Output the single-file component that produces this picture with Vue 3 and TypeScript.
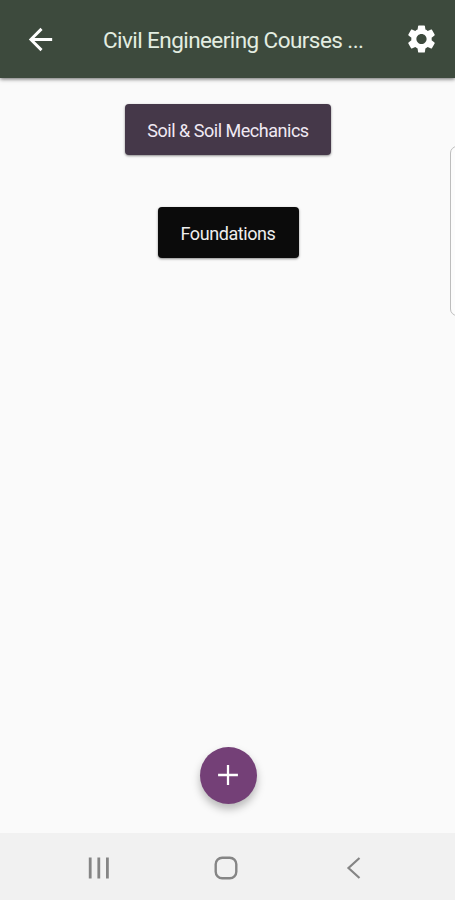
<script setup lang="ts">
interface Topic {
  label: string
  kind: string
}

const topics: Topic[] = [
  { label: 'Soil & Soil Mechanics', kind: 'soil' },
  { label: 'Foundations', kind: 'foundations' },
]
</script>

<template>
  <div class="screen">
    <header class="bar">
      <button class="icon-button" aria-label="Back">
        <svg width="35" height="35" viewBox="0 0 24 24" fill="currentColor">
          <path d="M20 11H7.83l5.59-5.59L12 4l-8 8 8 8 1.41-1.41L7.83 13H20v-2z" />
        </svg>
      </button>
      <h1 class="title">Civil Engineering Courses ...</h1>
      <button class="icon-button" aria-label="Settings">
        <svg width="34" height="34" viewBox="-0.35 0 24 24" fill="currentColor">
          <path d="M19.14 12.94c.04-.3.06-.61.06-.94 0-.32-.02-.64-.07-.94l2.03-1.58c.18-.14.23-.41.12-.61l-1.92-3.32c-.12-.22-.37-.29-.59-.22l-2.39.96c-.5-.38-1.03-.7-1.62-.94l-.36-2.54c-.04-.24-.24-.41-.48-.41h-3.84c-.24 0-.43.17-.47.41l-.36 2.54c-.59.24-1.13.57-1.62.94l-2.39-.96c-.22-.08-.47 0-.59.22L2.74 8.87c-.12.21-.08.47.12.61l2.03 1.58c-.05.3-.09.63-.09.94s.02.64.07.94l-2.03 1.58c-.18.14-.23.41-.12.61l1.92 3.32c.12.22.37.29.59.22l2.39-.96c.5.38 1.03.7 1.62.94l.36 2.54c.05.24.24.41.48.41h3.84c.24 0 .44-.17.47-.41l.36-2.54c.59-.24 1.13-.56 1.62-.94l2.39.96c.22.08.47 0 .59-.22l1.92-3.32c.12-.22.07-.47-.12-.61l-2.01-1.58zM12 15.6c-1.98 0-3.6-1.62-3.6-3.6s1.62-3.6 3.6-3.6 3.6 1.62 3.6 3.6-1.62 3.6-3.6 3.6z" />
        </svg>
      </button>
    </header>

    <main class="content">
      <button v-for="topic in topics" :key="topic.kind" class="topic" :class="topic.kind">
        <span>{{ topic.label }}</span>
      </button>
      <button class="fab" aria-label="Add">
        <svg width="34" height="34" viewBox="0 0 24 24" fill="currentColor">
          <path d="M19 12.8h-6.2V19h-1.6v-6.2H5v-1.6h6.2V5h1.6v6.2H19z" />
        </svg>
      </button>
      <div class="edge-handle"></div>
    </main>

    <nav class="system-nav">
      <svg width="24" height="24" viewBox="0 0 24 24" fill="none" stroke="currentColor" stroke-width="2.8">
        <path d="M4.2 1.5v21M12.8 1.5v21M21.4 1.5v21" />
      </svg>
      <svg width="24" height="24" viewBox="0 0 24 24" fill="none" stroke="currentColor" stroke-width="2.4">
        <rect x="1.7" y="1.7" width="20.6" height="20.6" rx="6.5" />
      </svg>
      <svg width="24" height="24" viewBox="0 0 24 24" fill="none" stroke="currentColor" stroke-width="2.2">
        <path d="M18.5 2L7.5 12l11 10" />
      </svg>
    </nav>
  </div>
</template>

<style>
body {
  margin: 0;
  overflow: hidden;
}
</style>

<style scoped>
.screen {
  display: flex;
  flex-direction: column;
  width: 455px;
  height: 900px;
  overflow: hidden;
  background: #fafafa;
  font-family: Roboto, 'Noto Sans', sans-serif;
}

button {
  border: 0;
  padding: 0;
  font: inherit;
  color: #fff;
}

svg {
  display: block;
}

.bar {
  display: flex;
  align-items: center;
  box-sizing: border-box;
  flex: none;
  height: 78px;
  padding: 0 17px 0 23px;
  background: #3d4a3d;
  box-shadow: 0 1px 4px rgba(0, 0, 0, 0.6);
  color: #fff;
  z-index: 1;
}

.icon-button {
  flex: none;
  background: none;
}

.title {
  flex: 1;
  margin: 0 0 0 45px;
  padding-top: 2px;
  font-size: 22.5px;
  font-weight: 400;
  line-height: 30px;
  letter-spacing: -0.57px;
  white-space: nowrap;
  color: #e3ede1;
}

.content {
  position: relative;
  display: flex;
  flex: 1;
  flex-direction: column;
  align-items: center;
  gap: 52px;
  box-sizing: border-box;
  padding: 26px 0 29.5px 1px;
}

.topic {
  flex: none;
  height: 51px;
  padding-top: 3px;
  border-radius: 4px;
  box-shadow: 0 1px 2.5px rgba(0, 0, 0, 0.45);
  font-size: 18px;
  line-height: 24px;
  white-space: nowrap;
}

.soil {
  width: 206px;
  background: #453849;
  color: #f0e9f3;
  letter-spacing: -0.48px;
}

.foundations {
  width: 141px;
  background: #0b0b0b;
  color: #eee;
  letter-spacing: -0.42px;
}

.fab {
  display: grid;
  place-items: center;
  width: 57px;
  height: 57px;
  margin-top: auto;
  border-radius: 50%;
  background: #744077;
  box-shadow: 0 5px 9px rgba(0, 0, 0, 0.27);
}

.edge-handle {
  position: absolute;
  top: 68px;
  left: 450px;
  box-sizing: border-box;
  width: 20px;
  height: 170px;
  border: 1px solid #bdbdbd;
  border-radius: 7px;
  background: #fcfcfc;
}

.system-nav {
  display: flex;
  flex: none;
  align-items: center;
  justify-content: space-between;
  box-sizing: border-box;
  height: 67px;
  padding: 3px 90px 0 86px;
  background: #f1f1f1;
  color: #858585;
}
</style>
